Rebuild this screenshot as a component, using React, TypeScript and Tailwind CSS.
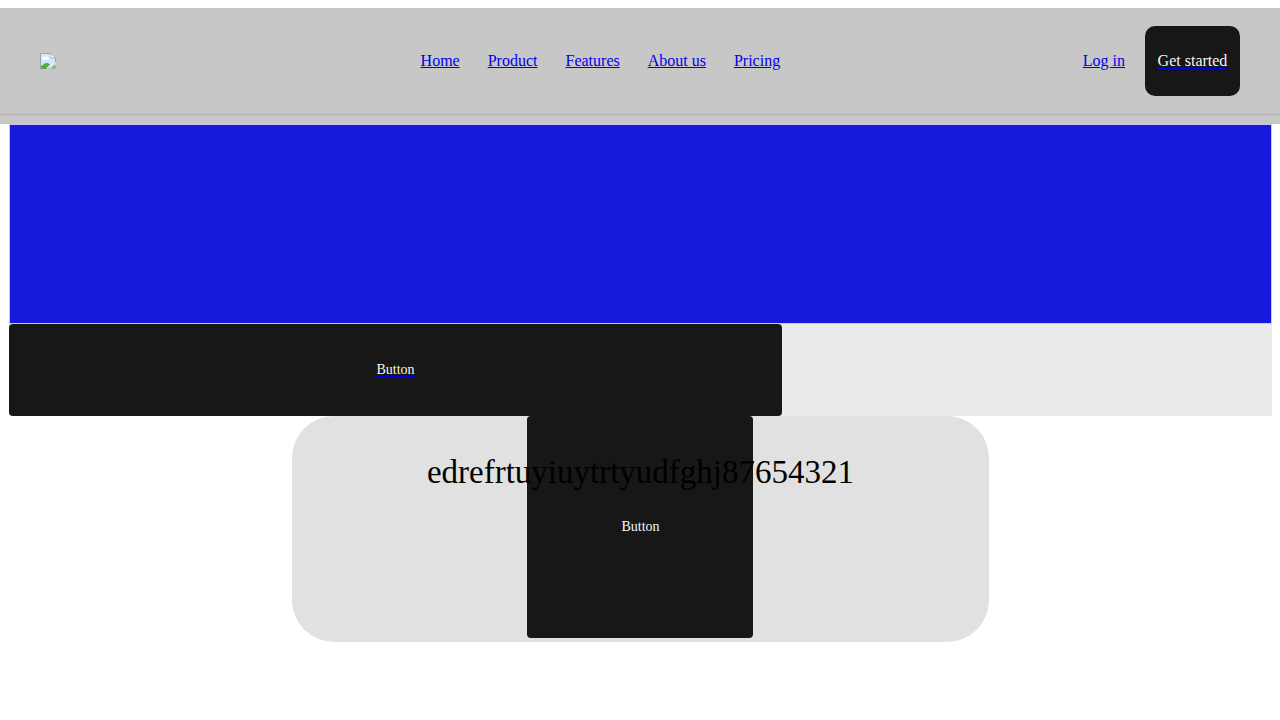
const links = ['Home', 'Product', 'Features', 'About us', 'Pricing'];

function BrokenImage() {
  return (
    <svg width="16" height="16" viewBox="0 0 16 16" role="img" aria-label="Logo">
      <path d="M0.5 0.5h10.5l4.500 4.500v3.500l-8 7h-7z" fill="#d3e5f8" />
      <path d="M0.5 15.5V0.5H11" fill="none" stroke="#8fa8b8" />
      <path d="M11 0.5v4.500h4.500z" fill="#f5f9fd" stroke="#93a9b9" strokeWidth="0.7" />
      <path d="M15.500 5v4" stroke="#8fa8b8" />
      <path d="M3 7a2 1.600 0 0 1 2-3 2 2 0 0 1 3.500 1.500A1 1 0 0 1 8.500 7z" fill="#fff" />
      <path d="M1 15v-2c2-0.500 3-3 5.500-3 1.500 0 2.500 0.500 3.500 1.500L6.500 15z" fill="#4cb233" />
      <path d="M15.500 9.500v2h-2l-3 3H8.500l4-4.500z" fill="#e9eedd" />
      <path d="M15.500 12v3.500H11z" fill="#7ba58b" />
      <path d="M0.500 15.500H7" stroke="#6f9a72" />
    </svg>
  );
}

function DarkLink({ label }: { label: string }) {
  return (
    <a href="#" className="text-[#0000ee] underline decoration-1 underline-offset-2">
      <span className="text-[#f5f5f5]">{label}</span>
    </a>
  );
}

export default function App() {
  return (
    <div className="pt-2 font-['Liberation_Serif',serif] text-base text-black">
      <header className="bg-[#c7c7c7] pb-2">
        <div className="flex items-center justify-between border-b-3 border-[#bdbdbf] px-10 pt-[18px] pb-[17px]">
          <div className="w-[78px]">
            <BrokenImage />
          </div>
          <nav className="flex gap-7">
            {links.map((label) => (
              <a key={label} href="#" className="text-[#0000ee] underline">
                {label}
              </a>
            ))}
          </nav>
          <div className="flex items-center gap-5">
            <a href="#" className="text-[#0000ee] underline">Log in</a>
            <div className="flex h-[70px] w-[95px] items-center justify-center rounded-[10px] bg-[#171717]">
              <DarkLink label="Get started" />
            </div>
          </div>
        </div>
      </header>
      <main className="mr-2 ml-[9px]">
        <section className="h-[200px] border border-[#c7c7ee] bg-[#181adb]" />
        <section className="bg-[#ebebeb]">
          <div className="flex h-[92px] w-[61.2%] items-center justify-center rounded bg-[#171717] text-sm">
            <DarkLink label="Button" />
          </div>
        </section>
        <section className="mx-auto grid w-[55.2%] justify-items-center rounded-[42px] bg-[#e1e1e1] pb-1">
          <div className="col-start-1 row-start-1 flex h-[222px] w-[226px] items-center justify-center rounded bg-[#171717] text-sm">
            <DarkLink label="Button" />
          </div>
          <h1 className="pointer-events-none z-10 col-start-1 row-start-1 pt-9 text-[33px] leading-10">
            edrefrtuyiuytrtyudfghj87654321
          </h1>
        </section>
      </main>
    </div>
  );
}
